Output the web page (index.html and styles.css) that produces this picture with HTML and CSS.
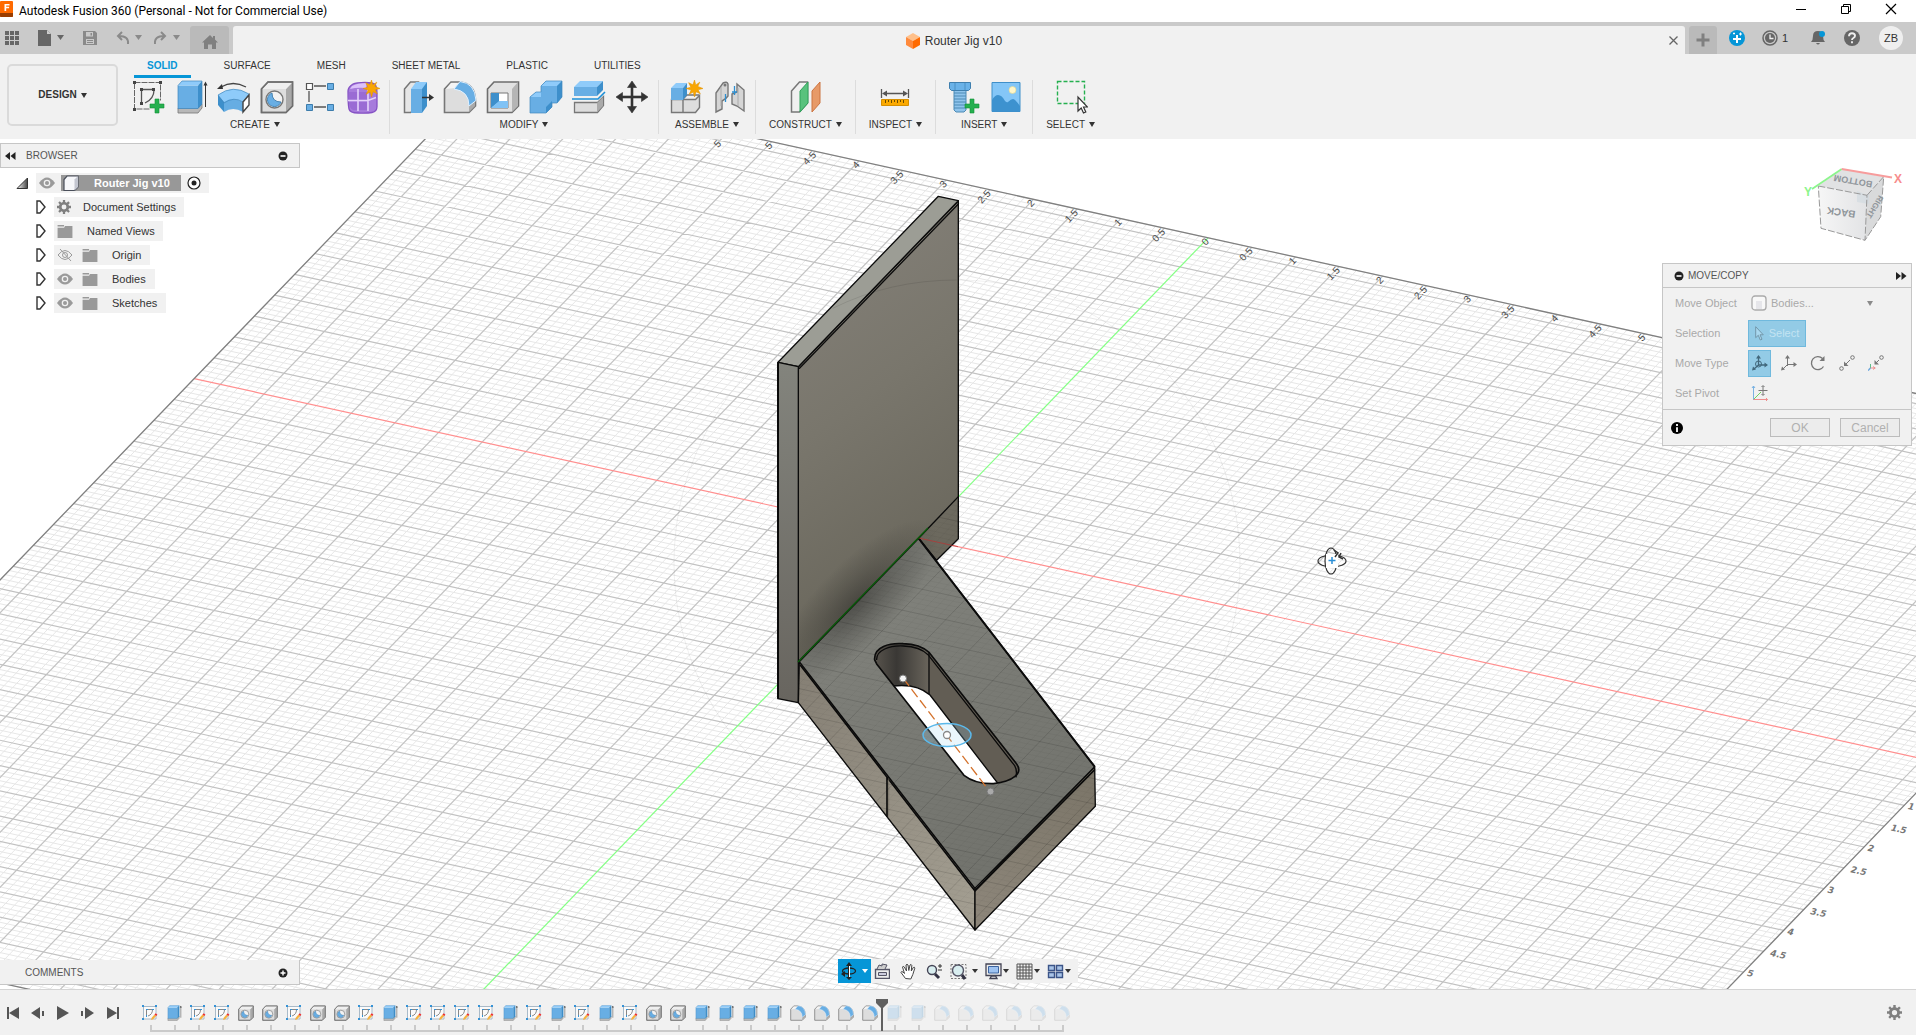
FILE: index.html
```html
<!DOCTYPE html>
<html lang="en">
<head>
<meta charset="utf-8">
<title>Autodesk Fusion 360 (Personal - Not for Commercial Use)</title>
<link rel="stylesheet" href="styles.css">
</head>
<body>
<svg class="sprite" aria-hidden="true">
  <defs>
    <linearGradient id="g-tri" x1="0" y1="0" x2="1" y2="0"><stop offset="0" stop-color="#fff"/><stop offset="1" stop-color="#444"/></linearGradient>
  </defs>
  <symbol id="star" viewBox="0 0 16 16"><path fill="#f9a602" stroke="#e39300" stroke-width=".5" d="M8 0l1.2 4.6L13 2l-1.900 4L16 8l-4.600 1.200L13.500 13l-4-1.900L8 16l-1.200-4.600L3 13.500l1.900-4L0 8l4.600-1.200L2.500 2.500l4 2z"/></symbol>
  <symbol id="i-sketch" viewBox="0 0 34 34">
    <path d="M3.500 3v26h16M3.500 2.500h26v18" fill="none" stroke="#666" stroke-dasharray="6 1"/>
    <path d="M10.500 23V9.500H22M23 10q0 9-9 13" fill="none" stroke="#555" stroke-width="1.300"/>
    <path d="M2 1h3v3H2zM28 1h3v3h-3zM2 28h3v3H2zM9 8h3v3H9zM21 8h3v3h-3zM9 22h3v3H9z" fill="#444"/>
    <path d="M24 19h4v5h5v4h-5v5h-4v-5h-5v-4h5z" fill="#25b04f" stroke="#129038" stroke-width=".6"/>
  </symbol>
  <symbol id="i-extrude" viewBox="0 0 34 34">
    <path d="M4 28h20l4-4v4l-4 5H4z" fill="#b8b8b8" stroke="#777" stroke-width=".8"/>
    <path d="M4 5.500h20v23H4z" fill="#68aee4"/><path d="M4 5.500L8 1h20l-4 4.500z" fill="#8fcbfa"/><path d="M24 5.500L28 1v23l-4 4.500z" fill="#3d8fcb"/>
    <path d="M4 28.500v-23L8 1h20v23l-4 4.500z" fill="none" stroke="#3f86bd" stroke-width=".7"/>
    <path d="M31.500 27V3" stroke="#333"/><path d="M31.500 1.500l2 4h-4z" fill="#333"/>
  </symbol>
  <symbol id="i-revolve" viewBox="0 0 34 34">
    <path d="M1 15q15-11 31-1l-6 8q-9-6-19 1z" fill="#8ecbfa"/>
    <path d="M1 15v10l6 7v-10z" fill="#3d8fcb"/><path d="M7 22q9-6 19 0v10q-10-6-19 0z" fill="#66ade3"/>
    <path d="M1 15q15-11 31-1l-6 8q-9-6-19 1z" fill="none" stroke="#3f86bd" stroke-width=".7"/>
    <path d="M26 22l6-7v10l-6 7z" fill="#fff" stroke="#444" stroke-width="1.400"/>
    <path d="M4 7q12-7 25 0" fill="none" stroke="#444" stroke-width="1.300"/><path d="M0 9l5-5 1 5z" fill="#333"/>
  </symbol>
  <symbol id="i-hole" viewBox="0 0 34 34">
    <path d="M1.500 9L8 2h24.500v24L26 32.500H1.500z" fill="#ddd" stroke="#777" stroke-width="1.600"/>
    <path d="M26 9l6-7v24l-6 6z" fill="#a9a9a9"/><path d="M2 9l6-6h24l-6 6z" fill="#efefef"/>
    <path d="M1.500 9L8 2h24.500v24L26 32.500H1.500z" fill="none" stroke="#6e6e6e" stroke-width="1.500"/>
    <circle cx="14.500" cy="19.500" r="8.500" fill="#f2f2f2" stroke="#777" stroke-width="1.400"/>
    <path d="M12 13a7 7 0 1 0 9 9q-9 0-9-9z" fill="#68aee4" stroke="#3d7cab" stroke-width=".9"/>
  </symbol>
  <symbol id="i-pattern" viewBox="0 0 34 34">
    <path d="M11 6h12M6 11v11M11 27h12" stroke="#555" stroke-width="1.300"/>
    <path d="M3.500 3.500h6v6h-6z" fill="#fff" stroke="#555" stroke-width="1.200"/>
    <path d="M24.500 3.500h6v6h-6zM3.500 24.500h6v6h-6zM24.500 24.500h6v6h-6z" fill="#68aee4" stroke="#3d7cab"/>
  </symbol>
  <symbol id="i-form" viewBox="0 0 34 34">
    <path d="M2 11q0-4 5-7 3-1.500 12-1.500 8 0 10 2 2 2 2 10v12q0 5-5 6t-14 .500q-8 0-9-4t-1-18z" fill="#a77bdc" stroke="#8552c4" stroke-width="1.300"/>
    <path d="M6 6q5-3 15-3l-1 5q-9-1-16 1z" fill="#dcc1fb"/><path d="M3 12h18v8H2.500zM3 22h18v8H7q-4-2-4-8z" fill="#9a6bd4"/>
    <path d="M12 9v22M2 20.500h20l8-3M22 9v22" fill="none" stroke="#e4d2fa" stroke-width="1.600"/>
    <use href="#star" x="17" y="0" width="17" height="17"/>
  </symbol>
  <symbol id="i-presspull" viewBox="0 0 34 34">
    <path d="M4.500 9l6-7h8v24l-8 6.500h-6z" fill="#e6e6e6" stroke="#777" stroke-width="1.500"/>
    <path d="M11 9l5-7h11l-4 7z" fill="#8ecbfa"/><path d="M11 9h11v24H11z" fill="#68aee4"/><path d="M22 9l5-7v24l-5 7z" fill="#3d8fcb"/>
    <path d="M22 17.500h9" stroke="#333" stroke-width="1.500"/><path d="M34 17.500l-5-3.500v7z" fill="#333"/>
  </symbol>
  <symbol id="i-fillet" viewBox="0 0 34 34">
    <path d="M1.500 9L8 2h8q16 1 16.500 18v6L26 32.500H1.500z" fill="#ddd" stroke="#777" stroke-width="1.600"/>
    <path d="M26 26l6-6v6l-6 6z" fill="#aaa"/><path d="M3 9l5-6h7l-3 5z" fill="#f4f4f4"/>
    <path d="M11 9l6-7.500q15 1.500 16 19l-7 5.500Q26 11 11 9z" fill="#68aee4" stroke="#dff0ff"/>
  </symbol>
  <symbol id="i-shell" viewBox="0 0 34 34">
    <path d="M1.500 9L8 2h24.500v24L26 32.500H1.500z" fill="#e2e2e2" stroke="#6e6e6e" stroke-width="1.600"/>
    <path d="M26 9l6-7v24l-6 6z" fill="#b5b5b5"/><path d="M5 13h17v15H5z" fill="#fff" stroke="#777"/>
    <path d="M5 13h8v9l-8 6z" fill="#3d8fcb"/><path d="M5 28l8-7h9v7z" fill="#7fc2f5"/>
  </symbol>
  <symbol id="i-combine" viewBox="0 0 34 34">
    <path d="M12 6l5-5h16v16l-5 6h-5v4l-6 6H1V17l6-5h5z" fill="#68aee4"/><path d="M12 6l5-5h16l-5 5z" fill="#8fcbfa"/><path d="M1 17l6-5h5v5z" fill="#8fcbfa"/>
    <path d="M28 6l5-5v16l-5 6zM17 27l6-6v6l-6 6z" fill="#3d8fcb"/>
    <path d="M12 6l5-5h16v16l-5 6h-5v4l-6 6H1V17l6-5h5z" fill="none" stroke="#3f86bd" stroke-width=".7"/>
  </symbol>
  <symbol id="i-split" viewBox="0 0 34 34">
    <path d="M2 7l6-6h23l-6 6z" fill="#8fcbfa"/><path d="M2 7h23v9H2z" fill="#68aee4"/><path d="M25 7l6-6v9l-6 6z" fill="#3d8fcb"/>
    <path d="M0 19h26l7-7" fill="none" stroke="#1d8fd6" stroke-width="1.600"/>
    <path d="M2.500 22.500h23l6-6v9l-6 7h-23z" fill="#ddd" stroke="#777" stroke-width="1.300"/><path d="M25 23l6-6v9l-6 6z" fill="#aaa"/>
  </symbol>
  <symbol id="i-move" viewBox="0 0 34 34"><path d="M17 1l4.500 6.500H18v8.500h8.500v-3.500L33 17l-6.500 4.500V18H18v8.500h3.500L17 33l-4.500-6.500H16V18H7.500v3.500L1 17l6.500-4.500V16H16V7.500h-3.500z" fill="#333" stroke="#333" stroke-width=".6"/></symbol>
  <symbol id="i-component" viewBox="0 0 34 34">
    <path d="M2.500 19.500h24l4-4v12l-4 5h-24z" fill="#ddd" stroke="#777" stroke-width="1.400"/><path d="M14 19.500v13M14 19l4-4h12" stroke="#777" fill="none" stroke-width="1.400"/>
    <path d="M2 8l5-5h11l-4 5z" fill="#8fcbfa"/><path d="M2 8h12v12H2z" fill="#68aee4"/><path d="M14 8l4-5v12l-4 5z" fill="#3d8fcb"/>
    <use href="#star" x="17" y="0" width="17" height="17"/>
  </symbol>
  <symbol id="i-joint" viewBox="0 0 34 34">
    <path d="M4 13l7-10q4-2 5 1v12q-2 3-6 5v8l-6 3z" fill="#d5d5d5" stroke="#777" stroke-width="1.400"/><path d="M9 7v19" stroke="#aaa"/><circle cx="13" cy="5" r="1.500" fill="#777"/>
    <path d="M25 4l7 6v21l-7-5-5-2V14l5-2z" fill="#d5d5d5" stroke="#777" stroke-width="1.400"/><path d="M26 8v18" stroke="#aaa"/>
    <path d="M13.500 14v8M22.500 6v9M20 12h5" stroke="#2e8fd0" stroke-width="1.300"/>
  </symbol>
  <symbol id="i-plane" viewBox="0 0 34 34">
    <path d="M3.500 11l8-9h8v21l-8 9h-8z" fill="#f0f0f0" stroke="#777" stroke-width="1.500"/>
    <path d="M12 11l8-9v21l-8 9z" fill="#58c27d" stroke="#2fa25a"/><path d="M24 11l8-9v21l-8 9z" fill="#e79a68" stroke="#cc7440"/>
  </symbol>
  <symbol id="i-measure" viewBox="0 0 34 34">
    <path d="M3.500 9v9M30.500 9v9M6 13.500h22" stroke="#555" stroke-width="1.300"/><path d="M4 13.500l5-3v6zM30 13.500l-5-3v6z" fill="#555"/>
    <path d="M3.500 19.500h27v6h-27z" fill="#fba900" stroke="#d68f00"/><path d="M7.500 20v3M10.500 20v2M13.500 20v3M16.500 20v2M19.500 20v3M22.500 20v2M25.500 20v3" stroke="#6a4a00"/>
  </symbol>
  <symbol id="i-bolt" viewBox="0 0 34 34">
    <path d="M8 10h12v20l-2 2h-8l-2-2z" fill="#8fc4ec" stroke="#4c8ab5"/><path d="M8 13h12M8 16h12M8 19h12M8 22h12M8 25h12M8 28h12" stroke="#4c8ab5"/>
    <path d="M3.500 2.500h21v6l-2 2h-17l-2-2z" fill="#6ab2e8" stroke="#3f7fae"/><path d="M9 3v7M19 3v7" stroke="#4a90c4"/>
    <path d="M24 19h4v5h5v4h-5v5h-4v-5h-5v-4h5z" fill="#25b04f" stroke="#129038" stroke-width=".6"/>
  </symbol>
  <symbol id="i-image" viewBox="0 0 34 34">
    <path d="M3 2.500h28v29H3z" fill="#84c6f7" stroke="#3f8fc9"/><circle cx="23.500" cy="10" r="3.500" fill="#fff6c9" stroke="#e2d58a" stroke-width=".6"/>
    <path d="M3 20q3-5 6-5 4 0 7 6 2 2 3 1 3-3 5-3t7 7v5.500H3z" fill="#3d92cf"/>
  </symbol>
  <symbol id="i-select" viewBox="0 0 34 34">
    <path d="M3.500 1.500h27v22h-27z" fill="none" stroke="#25b04f" stroke-width="1.400" stroke-dasharray="4 2"/>
    <path d="M24 17v14l3.200-3 2.300 5 2.300-1-2.300-5h4z" fill="#fff" stroke="#333" stroke-width="1.200"/>
  </symbol>
  <symbol id="t-sketch" viewBox="0 0 16 16">
    <path d="M1.500 1.500h12.500v12.500H1.500z" fill="#fafafa" stroke="#a9bac8"/><path d="M4.500 11V4.500h6q0 5-4.500 6.500" fill="none" stroke="#888"/>
    <path d="M0 0h2v2H0zM13 0h2v2h-2zM0 13h2v2H0zM4 4h2v1H4zM10 4h2v1h-2zM4 10h1v2H4z" fill="#3492d6"/>
    <path d="M9 15l.700-2.200 2.800-3.200 1.600 1.500-2.900 3.200z" fill="#f7b13c"/><path d="M12.500 9.500l1.300-1.300 1.600 1.500-1.200 1.400z" fill="#f12c2c"/>
  </symbol>
  <symbol id="eye" viewBox="0 0 16 12"><path d="M0 6q8-11 16 0-8 11-16 0z" fill="#9a9a9a"/><circle cx="8" cy="6" r="3.300" fill="#f1f1f1"/><circle cx="8" cy="6" r="2" fill="#9a9a9a"/></symbol>
  <symbol id="eye-off" viewBox="0 0 16 12"><path d="M1 6q7-9 14 0-7 9-14 0zM3 0l11 12" fill="none" stroke="#9a9a9a"/><circle cx="8" cy="6" r="2.500" fill="none" stroke="#9a9a9a"/></symbol>
  <symbol id="folder" viewBox="0 0 16 14"><path d="M0 0h7v1.500H0zM0 3h7l1-2h8v13H0z" fill="#999"/></symbol>
  <symbol id="gear" viewBox="0 0 16 16"><path fill="#808080" fill-rule="evenodd" d="M6.700 0h2.600v2.300l1.800.8L12.900 1.500l1.800 1.800-1.700 1.700.8 1.700H16v2.600h-2.200l-.8 1.800 1.700 1.700-1.800 1.800-1.700-1.700-1.900.8V16H6.700v-2.300l-1.800-.8-1.700 1.700-1.800-1.800L3 11.100l-.8-1.800H0V6.700h2.200L3 4.900 1.400 3.200l1.800-1.800L4.900 3.100l1.800-.8zM8 5.200a2.800 2.800 0 1 0 0 5.600 2.800 2.800 0 0 0 0-5.600z"/></symbol>
  <symbol id="expander" viewBox="0 0 10 14"><path d="M1 1l3 0 5 6-5 6H1z" fill="#fff" stroke="#333" stroke-width="1.400"/></symbol>
  <symbol id="cube" viewBox="0 0 16 16"><path d="M1 4.500L4 1h11v11l-3.500 3.500H1z" fill="#f6f7fa" stroke="#4a4f5a" stroke-width="1.200"/><path d="M11.500 4.500L15 1v11l-3.500 3.500z" fill="#c3c6d0"/></symbol>
  <symbol id="minus" viewBox="0 0 10 10"><circle cx="5" cy="5" r="4.500" fill="#222"/><path d="M2.500 5h5" stroke="#fff" stroke-width="1.600"/></symbol>
  <symbol id="plus" viewBox="0 0 10 10"><circle cx="5" cy="5" r="4.500" fill="#222"/><path d="M2.500 5h5M5 2.500v5" stroke="#fff" stroke-width="1.400"/></symbol>
</svg>

<header>
  <div class="titlebar">
    <svg class="app-logo" width="13" height="16" viewBox="0 0 13 16" aria-hidden="true"><rect width="13" height="16" rx="1" fill="#ff6a00"/><path d="M0 12h13v3q0 1-1 1H1q-1 0-1-1z" fill="#9a3d00"/><path d="M4.500 10V3h5v1.500H6.200v1.300h2.900v1.500H6.200V10z" fill="#fff"/></svg>
    <h1>Autodesk Fusion 360 (Personal - Not for Commercial Use)</h1>
    <div class="window-controls">
      <button aria-label="Minimize"><svg width="12" height="12"><path d="M1 6.500h10" stroke="#000"/></svg></button>
      <button aria-label="Restore"><svg width="12" height="12"><path d="M1.500 3.500h7v7h-7zM3.500 3V1.500h7v7H9" fill="none" stroke="#000"/></svg></button>
      <button aria-label="Close"><svg width="12" height="12"><path d="M1 1l10 10M11 1L1 11" stroke="#000" stroke-width="1.200"/></svg></button>
    </div>
  </div>

  <div class="appbar">
    <div class="quick">
      <button class="q-grid" aria-label="Data panel"><svg width="14" height="14"><path d="M0 0h4v4H0zM5 0h4v4H5zM10 0h4v4h-4zM0 5h4v4H0zM5 5h4v4H5zM10 5h4v4h-4zM0 10h4v4H0zM5 10h4v4H5zM10 10h4v4h-4z" fill="#666"/></svg></button>
      <button class="q-file" aria-label="File"><svg width="26" height="16"><path d="M0 0h9l4 4v12H0z" fill="#666"/><path d="M9 0v4h4" fill="#ccc"/><path d="M19 5h7l-3.500 5z" fill="#666"/></svg></button>
      <button class="q-save" aria-label="Save"><svg width="14" height="14"><path fill-rule="evenodd" d="M0 0h12l2 2v12H0zM3 1v4.500h7V1zM3 8v5h8V8zM7.500 2h1.500v2.500H7.500z" fill="#8a8a8a"/><path d="M4 9.500h6M4 11.500h6" stroke="#8a8a8a"/></svg></button>
      <button class="q-undo" aria-label="Undo"><svg width="26" height="14"><path d="M12 13Q13 5 3 5M6 1L2 5l4 4" fill="none" stroke="#8a8a8a" stroke-width="2"/><path d="M19 4h7l-3.500 5z" fill="#8a8a8a"/></svg></button>
      <button class="q-redo" aria-label="Redo"><svg width="26" height="14"><path d="M1 13Q0 5 10 5M7 1l4 4-4 4" fill="none" stroke="#8a8a8a" stroke-width="2"/><path d="M19 4h7l-3.500 5z" fill="#8a8a8a"/></svg></button>
    </div>
    <button class="tab-home" aria-label="Home"><svg width="16" height="16"><path d="M8 1L0 8.500h2V15h4v-4.500h4V15h4V8.500h2L13 5.500V2h-2v2z" fill="#808080"/></svg></button>
    <div class="tab-doc">
      <svg width="14" height="16" viewBox="0 0 14 16" aria-hidden="true"><path d="M7 0l7 4-7 4-7-4z" fill="#ffc08a"/><path d="M0 4l7 4v8l-7-4z" fill="#ff8a3c"/><path d="M14 4L7 8v8l7-4z" fill="#ff6a00"/></svg>
      <span>Router Jig v10</span>
      <button class="tab-close" aria-label="Close tab"><svg width="9" height="9"><path d="M.5.5l8 8M8.500.5l-8 8" stroke="#666" stroke-width="1.300"/></svg></button>
    </div>
    <button class="tab-new" aria-label="New tab"><svg width="14" height="14"><path d="M7 0.500v13M.5 7h13" stroke="#808080" stroke-width="3"/></svg></button>
    <div class="account">
      <button aria-label="Extensions"><svg width="16" height="16"><circle cx="8" cy="8" r="8" fill="#0696d7"/><path d="M8 5v8M4 9h8" stroke="#fff" stroke-width="2"/><path d="M4 3.500h2M5 2.500v2M10 4h3M11.500 2.500v3" stroke="#fff"/></svg></button>
      <button class="jobs"><svg width="16" height="16"><circle cx="8" cy="8" r="7" fill="none" stroke="#666" stroke-width="1.500"/><circle cx="8" cy="8" r="5" fill="#666"/><path d="M8 4.500V8.500h3.500" fill="none" stroke="#eee" stroke-width="1.300"/></svg>1</button>
      <button class="bell" aria-label="Notifications"><svg width="16" height="16"><path d="M7 1q5 0 5 5 0 4 2 6H0q2-2 2-6 0-5 5-5zM5 13h4q-2 3-4 0z" fill="#666"/><circle cx="11" cy="4" r="3" fill="#0696d7"/></svg></button>
      <button class="help" aria-label="Help"><svg width="16" height="16"><circle cx="8" cy="8" r="8" fill="#666"/><path d="M5 6.200q0-3 3-3t3 2.600q0 1.400-1.600 2.200-1.400.7-1.400 1.900M8 11.300v2" fill="none" stroke="#eee" stroke-width="1.900"/></svg></button>
      <button class="avatar">ZB</button>
    </div>
  </div>

  <div class="ribbon">
    <button class="workspace">DESIGN<i class="caret"></i></button>
    <div class="toolbox">
      <nav class="tabs">
        <button class="active">SOLID</button><button>SURFACE</button><button>MESH</button><button>SHEET METAL</button><button>PLASTIC</button><button>UTILITIES</button>
      </nav>
      <div class="groups">
        <section class="first">
          <div class="tools"><button aria-label="Create Sketch"><svg><use href="#i-sketch"/></svg></button><button aria-label="Extrude"><svg><use href="#i-extrude"/></svg></button><button aria-label="Revolve"><svg><use href="#i-revolve"/></svg></button><button aria-label="Hole"><svg><use href="#i-hole"/></svg></button><button aria-label="Pattern"><svg><use href="#i-pattern"/></svg></button><button aria-label="Create Form"><svg><use href="#i-form"/></svg></button></div>
          <button class="menu">CREATE<i class="caret"></i></button>
        </section>
        <section>
          <div class="tools"><button aria-label="Press Pull"><svg><use href="#i-presspull"/></svg></button><button aria-label="Fillet"><svg><use href="#i-fillet"/></svg></button><button aria-label="Shell"><svg><use href="#i-shell"/></svg></button><button aria-label="Combine"><svg><use href="#i-combine"/></svg></button><button aria-label="Split Body"><svg><use href="#i-split"/></svg></button><button aria-label="Move"><svg><use href="#i-move"/></svg></button></div>
          <button class="menu">MODIFY<i class="caret"></i></button>
        </section>
        <section>
          <div class="tools"><button aria-label="New Component"><svg><use href="#i-component"/></svg></button><button aria-label="Joint"><svg><use href="#i-joint"/></svg></button></div>
          <button class="menu">ASSEMBLE<i class="caret"></i></button>
        </section>
        <section>
          <div class="tools"><button aria-label="Offset Plane"><svg><use href="#i-plane"/></svg></button></div>
          <button class="menu">CONSTRUCT<i class="caret"></i></button>
        </section>
        <section>
          <div class="tools"><button aria-label="Measure"><svg><use href="#i-measure"/></svg></button></div>
          <button class="menu">INSPECT<i class="caret"></i></button>
        </section>
        <section>
          <div class="tools"><button aria-label="Insert Part"><svg><use href="#i-bolt"/></svg></button><button aria-label="Canvas"><svg><use href="#i-image"/></svg></button></div>
          <button class="menu">INSERT<i class="caret"></i></button>
        </section>
        <section>
          <div class="tools"><button aria-label="Select"><svg><use href="#i-select"/></svg></button></div>
          <button class="menu">SELECT<i class="caret"></i></button>
        </section>
      </div>
    </div>
  </div>
</header>

<main>
  <svg class="scene" viewBox="0 139 1916 850" preserveAspectRatio="xMidYMid slice" aria-label="Model view">
    <defs>
      <linearGradient id="m-front" x1="0" y1="0" x2=".25" y2="1"><stop offset="0" stop-color="#86827b"/><stop offset=".5" stop-color="#79766c"/><stop offset="1" stop-color="#68655a"/></linearGradient>
      <linearGradient id="m-side" x1="0" y1="0" x2="0" y2="1"><stop offset="0" stop-color="#83847d"/><stop offset="1" stop-color="#68655f"/></linearGradient>
      <linearGradient id="m-top" x1="0" y1="0" x2=".5" y2="1"><stop offset="0" stop-color="#757670"/><stop offset=".3" stop-color="#7f807a"/><stop offset="1" stop-color="#72736d"/></linearGradient>
      <linearGradient id="m-left" x1="0" y1="0" x2="1" y2="1"><stop offset="0" stop-color="#857f74"/><stop offset="1" stop-color="#a49f92"/></linearGradient>
      <linearGradient id="m-right" x1="0" y1="1" x2="1" y2="0"><stop offset="0" stop-color="#8d867a"/><stop offset="1" stop-color="#7b7568"/></linearGradient>
      <radialGradient id="m-shade" gradientUnits="userSpaceOnUse" cx="0" cy="0" r="1" gradientTransform="translate(290 1270) rotate(-46) scale(330 120)"><stop offset="0" stop-color="#2c2b28" stop-opacity=".55"/><stop offset=".5" stop-color="#2c2b28" stop-opacity=".25"/><stop offset="1" stop-color="#2c2b28" stop-opacity="0"/></radialGradient>
      <linearGradient id="m-slot"><stop offset="0" stop-color="#5f5a52"/><stop offset=".45" stop-color="#3a3835"/><stop offset="1" stop-color="#6a655c"/></linearGradient>
      <clipPath id="plate"><path d="M476 1075l525 687 5 117-361 371-530-682v-123zM595 950v126l-65 65-54-66z"/></clipPath>
      <clipPath id="slot"><path d="M344 1440C340 1400 390 1388 430 1391Q480 1392 508 1418L770 1752C790 1780 760 1804 700 1811Q645 1812 612 1786L350 1452z"/></clipPath>
      <linearGradient id="vc"><stop offset="0" stop-color="#f6f6f6"/><stop offset="1" stop-color="#e2e3e5"/></linearGradient>
    </defs>
    <g id="grid" fill="none"></g>
    <circle cx="957" cy="563" r="283" fill="none" stroke="#000" stroke-opacity=".06"/>
    <g id="rulers"></g>
    <g transform="translate(760 180) scale(.33333)" stroke="#0b0b0b" stroke-width="4" stroke-linejoin="round">
      <path d="M115 560L595 62V1076L530 1141 476 1075 115 1445z" fill="url(#m-front)"/>
      <path d="M115 560L595 62V1076L530 1141 476 1075 115 1445z" fill="url(#m-shade)" stroke="none"/>
      <path d="M54 547L535 49 595 62 115 560z" fill="#9c9d95"/>
      <path d="M54 547L115 560V1568L54 1556z" fill="url(#m-side)"/>
      <path d="M54 547V1556" stroke-width="6"/>
      <path d="M117 566L595 72" fill="none"/>
      <path d="M218 385Q390 300 590 300" fill="none" stroke-opacity=".1" stroke-width="3"/>
      <path d="M595 950L476 1075" fill="none"/>
      <path d="M118 1445L645 2125V2250L115 1568z" fill="url(#m-left)"/>
      <path d="M1004 1760L1006 1879 645 2250V2130z" fill="url(#m-right)"/>
      <path d="M476 1075L1004 1760 645 2125 118 1445z" fill="url(#m-top)"/>
      <path d="M476 1075L1004 1760 645 2125 118 1445z" fill="url(#m-shade)" stroke="none"/>
      <path d="M120 1454L645 2133 1005 1768M381 1790V1910" fill="none" stroke-width="5"/>
      <path d="M386 1795V1912" fill="none" stroke="#746e62" stroke-width="2"/>
      <path d="M476 1075L1004 1760" stroke-width="6"/>
    </g>
    <g id="overlay"></g>
    <g transform="translate(760 180) scale(.33333)" stroke="#0b0b0b" stroke-width="4" stroke-linejoin="round">
      <g clip-path="url(#slot)">
        <rect x="330" y="1380" width="460" height="440" fill="#625d54" stroke="none"/>
        <rect x="330" y="1380" width="178" height="180" fill="url(#m-slot)" stroke="none"/>
        <path d="M400 1518Q470 1510 510 1545L715 1812H560z" fill="#fff"/>
        <path d="M507 1415V1542" fill="none"/>
      </g>
      <path d="M344 1440C340 1400 390 1388 430 1391Q480 1392 508 1418L770 1752C790 1780 760 1804 700 1811Q645 1812 612 1786L350 1452z" fill="none" stroke-width="5"/>
      <path d="M350 1440C348 1410 390 1396 430 1398Q480 1400 504 1424L764 1757Q772 1770 768 1792" fill="none"/>
    </g>
    <path d="M918.700 538L958 546.700" stroke="#b33" stroke-width="1" opacity=".7"/>
    <path d="M928 528L798 662" stroke="#0b5a0b" stroke-width="1.500"/>
    <path d="M903 678l87 114" stroke="#d4722c" stroke-width="1.300" stroke-dasharray="10 4" fill="none"/>
    <g stroke="#777" fill="#f4f4f4"><circle cx="903" cy="678.500" r="3.500"/><circle cx="990.500" cy="791.500" r="3.500" fill="#aaa"/></g>
    <ellipse cx="947" cy="735" rx="24" ry="11.500" fill="#9fd4f2" fill-opacity=".22" stroke="#5bb8ea" stroke-width="1.500"/>
    <circle cx="947" cy="735" r="3.500" fill="#fff" stroke="#888" stroke-width="1.300"/>
    <g class="viewcube">
      <path d="M1818.300 186l48.700 9.300-2 45-44-12z" fill="url(#vc)"/>
      <path d="M1841.700 169l42 7.700-16.700 18.600-48.700-9.300z" fill="#e1e2e3"/>
      <path d="M1883.700 176.700l-3 40-15.700 23.600 2-45z" fill="#d9dadb"/>
      <path d="M1857 191l10 4 2-3 0 12-12-2z" fill="#cfd8df" opacity=".6"/>
      <path d="M1818.300 186l48.700 9.300-2 45-44-12zM1867 195.300l16.700-18.600-3 40-15.700 23.600" fill="none" stroke="#999" stroke-dasharray="7 2"/>
      <path d="M1841.700 169L1812 189" stroke="#8cf58c" stroke-width="1.800"/><path d="M1841.700 169L1892 177.500" stroke="#f79c9c" stroke-width="1.800"/>
      <text x="1841" y="213" class="vc-text" transform="rotate(188 1841 213)" dy="4">BACK</text>
      <text x="1853" y="181" class="vc-text mid" transform="rotate(190 1853 181)" dy="3">BOTTOM</text>
      <text x="1875" y="207" class="vc-text small" transform="rotate(122 1875 207)" dy="3">RIGHT</text>
      <text x="1808" y="196" class="vc-axis" fill="#8cf58c">Y</text><text x="1898" y="183" class="vc-axis" fill="#f78c8c">X</text>
    </g>
    <g fill="none" stroke="#333" stroke-width="1.200"><ellipse cx="1332" cy="561" rx="14" ry="6"/><ellipse cx="1331" cy="561" rx="6" ry="13"/><path d="M1326 554h12v14h-12z" fill="#fff" stroke="none"/><path d="M1328.500 560.500h7M1332 557v7" stroke="#2b8fd6" stroke-width="1.500"/><path d="M1334 550l4 3-3 4M1341 553l-2 4 4 2" stroke-width="1.500"/></g>
  </svg>

  <aside class="browser">
    <div class="panel-head"><svg width="11" height="8"><path d="M5 0v8L0 4zM10.500 0v8l-5-4z" fill="#222"/></svg><h2>BROWSER</h2><svg width="10" height="10"><use href="#minus"/></svg></div>
    <ul class="tree">
      <li class="root"><svg width="12" height="12"><path d="M1 11.500h10.500V1z" fill="url(#g-tri)" stroke="#333"/></svg>
        <div class="node"><svg width="16" height="12"><use href="#eye"/></svg><b><svg width="16" height="16"><use href="#cube"/></svg>Router Jig v10</b><svg width="14" height="14"><circle cx="7" cy="7" r="6" fill="#fff" stroke="#222" stroke-width="1.200"/><circle cx="7" cy="7" r="2.500" fill="#222"/></svg></div></li>
      <li><svg width="10" height="14"><use href="#expander"/></svg><div class="node settings"><svg width="14" height="14"><use href="#gear"/></svg>Document Settings</div></li>
      <li><svg width="10" height="14"><use href="#expander"/></svg><div class="node views"><svg width="16" height="13"><use href="#folder"/></svg>Named Views</div></li>
      <li><svg width="10" height="14"><use href="#expander"/></svg><div class="node"><svg width="16" height="12"><use href="#eye-off"/></svg><svg width="16" height="13"><use href="#folder"/></svg><span>Origin</span></div></li>
      <li><svg width="10" height="14"><use href="#expander"/></svg><div class="node"><svg width="16" height="12"><use href="#eye"/></svg><svg width="16" height="13"><use href="#folder"/></svg><span>Bodies</span></div></li>
      <li><svg width="10" height="14"><use href="#expander"/></svg><div class="node"><svg width="16" height="12"><use href="#eye"/></svg><svg width="16" height="13"><use href="#folder"/></svg><span>Sketches</span></div></li>
    </ul>
  </aside>

  <form class="dialog">
    <div class="dialog-head"><svg width="10" height="10"><use href="#minus"/></svg><h2>MOVE/COPY</h2><svg width="11" height="8"><path d="M0 0v8l5-4zM5.500 0v8l5-4z" fill="#222"/></svg></div>
    <div class="fields">
      <label for="obj">Move Object</label>
      <div class="combo"><svg width="16" height="16"><rect x="1" y="1" width="14" height="14" rx="3" fill="#f8f8f8" stroke="#aaa" stroke-width="1.300"/><path d="M5 6h6v8H5z" fill="#e6e6ea"/></svg><select id="obj" disabled><option>Bodies...</option></select><i class="caret"></i></div>
      <span>Selection</span>
      <div><button type="button" class="pick" disabled><svg width="9" height="15"><path d="M.7.7v11l2.600-2.400 2 4.700 1.700-.8-2-4.400h3.300z" fill="#a9d8ef" stroke="#7297aa"/></svg>Select</button></div>
      <span>Move Type</span>
      <div class="types">
        <button type="button" class="on" aria-label="Free Move"><svg width="16" height="16"><path d="M6.500 11V1M6.500 10h8M6.500 10L2 14" stroke="#42687c" stroke-width="1.300"/><path d="M6.500 0l2.500 3.500H4zM16 10l-3.500 2.500v-5zM0 15.500l1-4 3 3z" fill="#42687c"/><circle cx="6.500" cy="9" r="3" fill="none" stroke="#42687c"/></svg></button>
        <button type="button" aria-label="Translate"><svg width="16" height="16"><path d="M6.500 11V1M6.500 9.500h8M6.500 9.500L2 14" stroke="#777"/><path d="M6.500 0l2.500 3.500H4zM16 9.500l-3.500 2.500v-5zM0 15.500l1-4 3 3z" fill="#777"/></svg></button>
        <button type="button" aria-label="Rotate"><svg width="16" height="16"><path d="M12.500 3.500a6.500 6.500 0 1 0 1 8" fill="none" stroke="#777" stroke-width="1.300"/><path d="M14.500 1v5h-5z" fill="#777"/></svg></button>
        <button type="button" aria-label="Point to Point"><svg width="16" height="16"><circle cx="13.500" cy="2.500" r="1.800" fill="none" stroke="#777"/><circle cx="2.500" cy="13.500" r="1.800" fill="none" stroke="#777"/><path d="M11 5L7 9" stroke="#777"/><path d="M5 11V6.500L9.500 11z" fill="#777"/></svg></button>
        <button type="button" aria-label="Point to Position"><svg width="16" height="16"><circle cx="13.500" cy="2.500" r="1.800" fill="none" stroke="#777"/><path d="M11 5L8 8" stroke="#777"/><path d="M6.500 9.500V5L11 9.500z" fill="#777"/><path d="M2.500 13V9" stroke="#5fc088"/><path d="M2.500 13h5M5 11.500L7 13l-2 1.500" stroke="#ee8d8d" fill="none"/><path d="M2.500 13L0 15.500" stroke="#69a5dd" stroke-width="1.500"/></svg></button>
      </div>
      <span>Set Pivot</span>
      <div class="pivot"><button type="button" aria-label="Set Pivot"><svg width="18" height="16"><path d="M2.500 15V1M1 3l1.500-2L4 3" stroke="#7ab2e2" fill="none"/><path d="M2.500 14.500h14M15 13l1.500 1.500L15 16" stroke="#ee8d8d" fill="none"/><path d="M3 14l7-7" stroke="#6fd45f"/><path d="M12 1v9M7.500 5.500h9" stroke="#777"/><path d="M10.500 2L12 .5 13.500 2M10.500 9l1.500 1.500L13.500 9" fill="none" stroke="#777"/></svg></button></div>
    </div>
    <div class="actions"><svg width="12" height="12"><circle cx="6" cy="6" r="6"/><path d="M6 2v2M6 5.200V10" stroke="#fff" stroke-width="1.800"/></svg><button type="button" disabled>OK</button><button type="button" disabled>Cancel</button></div>
  </form>

  <aside class="comments"><h2>COMMENTS</h2><svg width="10" height="10"><use href="#plus"/></svg></aside>

  <nav class="navbar">
    <button class="orbit" aria-label="Orbit"><svg width="16" height="18"><ellipse cx="8" cy="9" rx="6.500" ry="3" fill="none" stroke="#222" stroke-width="1.300"/><path d="M8 2v14" stroke="#fff" stroke-width="2"/><path d="M8 0l3 4H5zM8 18l3-3H5zM0 12l4-3v6z" fill="#222"/><path d="M7.500 4v11" stroke="#222"/></svg><i class="caret light"></i></button>
    <button aria-label="Look At"><svg width="16" height="16"><path d="M1.500 6.500h14v9h-14z" fill="#eee" stroke="#556" stroke-width="1.400"/><path d="M4.500 9.500h8v3h-8z" fill="#ccd" stroke="#556"/><path d="M3 6l2-4 3 1v-2l5 1-2 4" fill="#ccc" stroke="#556"/></svg></button>
    <button aria-label="Pan"><svg width="17" height="17"><path d="M5.500 15.500L1 9.500q0-1.500 2-.5l1.500 1.500L2.500 4q.5-1.500 1.800 0L6.500 8 6 2q1-1.500 2 0l.8 5.500L10 2q1.200-1.200 1.800.2L11.300 8l2-3.500q1.500-.8 1.500.7l-2 6.300-2 4.500z" fill="#fff" stroke="#444"/></svg></button>
    <button aria-label="Zoom"><svg width="17" height="17"><circle cx="6" cy="7" r="4.500" fill="#d9eef0" stroke="#445" stroke-width="1.400"/><path d="M9 11l4 4" stroke="#334" stroke-width="3"/><path d="M14 1v4M12 3h4M12 7h4" stroke="#333"/></svg></button>
    <button class="wide" aria-label="Fit"><svg width="17" height="17"><path d="M1 1.500h15v14H1z" fill="none" stroke="#777" stroke-dasharray="2 1.500"/><circle cx="8" cy="7.500" r="5.500" fill="#d9eef0" stroke="#556" stroke-width="1.400"/><path d="M12 12l3 4" stroke="#334" stroke-width="3"/></svg><i class="caret"></i></button>
    <button class="wide tight" aria-label="Display Settings"><svg width="17" height="17"><path d="M1 1h15v11.500H1zM5 15.500h7L10.500 13h-4z" fill="#eee" stroke="#445" stroke-width="1.300"/><path d="M3.500 3.500h10v6.500h-10z" fill="#9ec3f2" stroke="#3d64a0"/></svg><i class="caret"></i></button>
    <button class="wide tight" aria-label="Grid and Snaps"><svg width="17" height="17"><path d="M1 1h15v15H1zM4 1v15M7 1v15M10 1v15M13 1v15M1 4h15M1 7h15M1 10h15M1 13h15" fill="none" stroke="#555"/></svg><i class="caret"></i></button>
    <button class="wide tight" aria-label="Viewports"><svg width="17" height="15"><path d="M1.500 1.500h6v5h-6zM9.500 1.500h6v5h-6zM1.500 8.500h6v5h-6zM9.500 8.500h6v5h-6z" fill="#a9c4e8" stroke="#3b5488" stroke-width="1.400"/></svg><i class="caret"></i></button>
  </nav>
</main>

<footer>
  <div class="playback">
    <button aria-label="To start"><svg width="12" height="12"><path d="M0 0h2v12H0zM12 0v12L2 6z" fill="#555"/></svg></button>
    <button aria-label="Step back"><svg width="13" height="12"><path d="M9 0v12L0 6zM11 4h2v5h-2z" fill="#555"/></svg></button>
    <button aria-label="Play"><svg width="12" height="14"><path d="M0 0l12 7-12 7z" fill="#555"/></svg></button>
    <button aria-label="Step forward"><svg width="13" height="12"><path d="M4 0v12l9-6zM0 4h2v5H0z" fill="#555"/></svg></button>
    <button aria-label="To end"><svg width="12" height="12"><path d="M10 0h2v12h-2zM0 0v12l10-6z" fill="#555"/></svg></button>
  </div>
  <ol class="timeline" id="timeline"></ol>
  <button class="prefs" aria-label="Preferences"><svg width="15" height="15"><use href="#gear"/></svg></button>
</footer>
<script src="script.js"></script>
</body>
</html>
```
FILE: styles.css
```css
* { box-sizing: border-box; }
body { margin: 0; height: 100vh; display: flex; flex-direction: column; overflow: hidden; background: #fff; color: #333; font: 11px/16px "Liberation Sans", Arial, sans-serif; }
button { font: inherit; color: inherit; background: none; border: 0; padding: 0; display: flex; align-items: center; justify-content: center; }
h1, h2 { margin: 0; font-weight: normal; }
ul, ol { margin: 0; padding: 0; list-style: none; }
svg { flex: none; display: block; }
.sprite { position: absolute; width: 0; height: 0; }
.caret { display: block; margin-left: 4px; border: 3px solid transparent; border-top: 5px solid #333; border-bottom: 0; }

.titlebar { height: 22px; display: flex; align-items: center; }
.app-logo { margin-top: -4px; }
.titlebar h1 { margin: 0 0 0 6px; flex: 1; color: #000; font: 12px/16px Roboto, sans-serif; }
.window-controls { display: flex; margin-top: -4px; padding-right: 3px; }
.window-controls button { width: 45px; }

.appbar { height: 32px; padding: 4px 2px 0 0; background: #cacaca; display: flex; }
.quick { display: flex; align-items: center; width: 190px; padding: 0 0 4px 5px; }
.q-file, .q-save, .q-undo { margin-left: 19px; }
.q-redo { margin-left: 12px; }
.tab-home { width: 39px; background: #bababa; border-radius: 3px 3px 0 0; padding-top: 3px; }
.tab-doc { flex: 1; margin-left: 4px; display: flex; align-items: center; justify-content: center; gap: 5px; background: #f1f1f1; border-radius: 3px 3px 0 0; position: relative; font-size: 12px; padding: 2px 10px 0 0; }
.tab-close { position: absolute; right: 7px; top: 10px; }
.tab-new { width: 28px; margin: 0 12px 0 4px; background: #bababa; border-radius: 3px 3px 0 0; }
.account { display: flex; align-items: center; padding: 0 11px 4px 0; }
.jobs { gap: 4px; margin-left: 17px; }
.bell { margin-left: 23px; }
.help { margin-left: 17px; }
.avatar { margin-left: 19px; width: 24px; height: 24px; border-radius: 12px; background: #efefef; }

.ribbon { height: 85px; background: #f1f1f1; display: flex; padding-left: 7px; }
.workspace { width: 111px; height: 62px; margin-top: 10px; border: 2px solid #dadada; border-radius: 5px; font-size: 10px; font-weight: bold; }
.tabs { display: flex; gap: 20px; padding-left: 16px; }
.tabs button { height: 24px; padding: 2px 13px 0; font-size: 10px; border-bottom: 3px solid transparent; }
.tabs .active { color: #0696d7; border-color: #0696d7; font-weight: bold; }
.groups { display: flex; padding-top: 2px; }
.groups section { display: flex; flex-direction: column; align-items: center; border-left: 1px solid #dcdcdc; padding: 0 5px; height: 54px; }
.groups .first { border: 0; padding-left: 8px; }
.tools { display: flex; height: 34px; }
.tools button { width: 43px; }
.tools svg { width: 34px; height: 34px; }
.menu { height: 24px; font-size: 10px; padding: 1px 8px 0; }

main { flex: 1; position: relative; overflow: hidden; min-height: 0; }
.scene { position: absolute; inset: 0; width: 100%; height: 100%; }
.ruler-top { font-size: 10px; fill: #4a4a4a; text-anchor: end; }
.ruler-right { font: italic bold 9px "DejaVu Sans", sans-serif; fill: #777; }
.vc-text { font-weight: bold; font-size: 10px; fill: #8f959a; text-anchor: middle; }
.vc-text.mid { font-size: 9px; }
.vc-text.small { font-size: 8px; }
.vc-axis { font-weight: bold; font-size: 12px; text-anchor: middle; }

h2 { font-size: 10px; color: #555; flex: 1; }
.browser { position: absolute; left: 0; top: 4px; width: 300px; }
.panel-head { height: 25px; display: flex; align-items: center; gap: 10px; padding: 0 11px 0 4px; background: #f1f1f1; border: 1px solid #c6c6c6; }
.tree { padding-top: 3px; }
.tree li { display: flex; align-items: center; height: 24px; gap: 8px; padding-left: 36px; }
.tree .root { padding-left: 16px; }
.node { height: 20px; display: flex; align-items: center; background: #f1f1f1; padding: 0 8px 0 3px; gap: 9px; }
.node span { padding: 0 1px 0 5px; }
.node.settings { gap: 12px; }
.node.views { gap: 14px; }
.root .node { gap: 6px; }
.node b { display: flex; align-items: center; gap: 15px; background: #989898; color: #fff; height: 16px; padding: 0 11px 0 2px; }

.dialog { position: absolute; right: 4px; top: 124px; width: 250px; background: #f1f1f1; border: 1px solid #c6c6c6; color: #a9a9a9; }
.dialog-head { height: 24px; display: flex; align-items: center; gap: 4px; padding: 0 4px 0 11px; border-bottom: 1px solid #c6c6c6; }
.fields { display: grid; grid-template-columns: 73px 1fr; grid-auto-rows: 30px; align-items: center; padding: 0 0 1px 12px; }
.combo { display: flex; align-items: center; gap: 4px; padding-left: 3px; }
.combo select { appearance: none; border: 0; padding: 0; background: none; font: inherit; color: #a9a9a9; opacity: 1; width: 88px; }
.combo .caret { border-top-color: #8a8a8a; }
.pick { width: 58px; height: 27px; gap: 5px; background: #93cbe6; border: 1px solid #70b9dd; color: #c3e3f2; }
.types { display: flex; gap: 6px; }
.types button { width: 23px; height: 27px; }
.types .on { background: #93cbe6; border: 1px solid #70b9dd; }
.pivot { padding-left: 3px; }
.actions { height: 36px; display: flex; align-items: center; padding: 0 11px 0 8px; gap: 10px; border-top: 1px solid #c6c6c6; }
.actions svg { margin-right: auto; }
.actions button { width: 60px; height: 19px; border: 1px solid #bcbcbc; background: #ececec; font-size: 12px; color: #b0b0b0; }

.comments { position: absolute; left: 0; bottom: 4px; width: 300px; height: 25px; display: flex; align-items: center; padding: 1px 11px 0 25px; background: #f1f1f1; border: 1px solid #c6c6c6; border-width: 0 1px 1px 0; }
.navbar { position: absolute; left: 838px; bottom: 6px; height: 24px; display: flex; background: #f1f1f1; padding-right: 4px; }
.navbar button { width: 26px; }
.navbar .caret { margin-left: 5px; border-top-width: 4px; }
.navbar .orbit { width: 33px; background: #0696d7; margin-right: -2px; }
.navbar .caret.light { border-top-color: #fff; }
.navbar .wide { width: 34px; }
.navbar .tight { width: 31px; }
.tight .caret { margin-left: 1px; }

footer { height: 46px; background: #f1f1f1; border-top: 1px solid #d4d4d4; display: flex; }
.playback { display: flex; }
.playback button { width: 25px; }
.timeline { margin-left: 13px; display: flex; flex: 1; }
.timeline li { width: 24px; padding: 15px 4px 0; position: relative; height: 42px; }
.timeline li::before { content: ""; position: absolute; left: 0; right: 0; bottom: 0; height: 2px; background: #cacaca; }
.timeline li:first-child::before { left: 12px; }
.timeline li:last-child::before { right: 10px; }
.timeline li::after { content: ""; position: absolute; left: 12px; bottom: 2px; width: 2px; height: 5px; background: #cacaca; }
.timeline svg { width: 16px; height: 16px; }
.timeline .faded { opacity: 1; }
.timeline .faded svg:not(.marker) { opacity: .25; }
.timeline .marker { position: absolute; left: -6px; top: 9px; width: 12px; height: 32px; z-index: 1; }
.prefs { width: 44px; }
```
FILE: script.js
```js
// Ground plane: grid steps of half a unit projected to the view.
const NS = "http://www.w3.org/2000/svg";
const O = [918.7, 538], U = [43.65, 9.6], V = [-20.1, 20.85];
const X0 = -16.6, X1 = 23.5, Y0 = -14.4, Y1 = 25.6;
const at = (a, b) => [O[0] + a * U[0] + b * V[0], O[1] + a * U[1] + b * V[1]];
const pt = (a, b) => at(a, b).map(n => n.toFixed(1)).join(" ");
const seg = (a, b, c, d) => `M${pt(a, b)}L${pt(c, d)}`;

function add(parent, tag, attrs, text) {
  const el = document.createElementNS(NS, tag);
  for (const k in attrs) el.setAttribute(k, attrs[k]);
  if (text) el.textContent = text;
  parent.appendChild(el);
  return el;
}

let minor = "", major = "";
for (let i = Math.round(X0 * 5); i <= X1 * 5; i++) {
  const s = seg(i / 5, Y0, i / 5, Y1);
  if (i % 5) minor += s; else if (i) major += s;
}
for (let i = Math.round(Y0 * 5); i <= Y1 * 5; i++) {
  const s = seg(X0, i / 5, X1, i / 5);
  if (i % 5) minor += s; else if (i) major += s;
}
const grid = document.getElementById("grid");
add(grid, "path", { d: minor, stroke: "#e7e7e7" });
add(grid, "path", { d: major, stroke: "#c2c2c2", "stroke-width": 1.2 });
add(grid, "path", { d: seg(X0, 0, X1, 0), stroke: "#ff8f8f", "stroke-width": 1.2 });
add(grid, "path", { d: seg(0, Y0, 0, Y1), stroke: "#84ff84", "stroke-width": 1.2 });
add(grid, "path", { d: `M${pt(X0, Y0)}L${pt(X1, Y0)}L${pt(X1, Y1)}L${pt(X0, Y1)}Z`, stroke: "#808080", "stroke-width": 1.3 });

// The plane shows faintly through the parts of the body below it.
const over = add(document.getElementById("overlay"), "g", { transform: "translate(760 180) scale(.33333)" });
const clip = add(over, "g", { "clip-path": "url(#plate)" });
const back = add(clip, "g", { transform: "scale(3) translate(-760 -180)", fill: "none", stroke: "#000" });
add(back, "path", { d: minor, "stroke-opacity": .035 });
add(back, "path", { d: major, "stroke-opacity": .13 });

// Scale figures along the far and right edges, in whole and half units.
const rulers = document.getElementById("rulers");
function topLabel(i, label, dx) {
  const [x, y] = at(i, Y0);
  add(rulers, "text", { x, y, dx, dy: 4, class: "ruler-top", transform: `rotate(-46 ${x} ${y})` }, label);
}
topLabel(-11, "5", -13);
for (let i = -10; i <= 10; i++) topLabel(i, String(Math.abs(i) / 2), -2);
for (let i = 2; i <= 10; i++) {
  const [x, y] = at(X1, i);
  add(rulers, "text", { x, y, dx: i % 2 ? 7 : 4, dy: 3, class: "ruler-right", transform: `rotate(12 ${x} ${y})` }, String(i / 2));
}

// Feature history: s sketch, e extrude, h hole, f fillet.
const icons = { s: "t-sketch", e: "i-extrude", h: "i-hole", f: "i-fillet" };
const features = "sesshhshh" + "sessss" + "eseses" + "hh" + "eeee" + "ffff" + "ee" + "ffffff";
const MARKER = 31;
document.getElementById("timeline").innerHTML = [...features].map((k, i) =>
  `<li class="${i >= MARKER ? "faded" : ""}">` +
  (i === MARKER ? '<svg class="marker" viewBox="0 0 12 32"><path d="M0 0h12v4L7 9v23H5V9L0 4z" fill="#606060"/></svg>' : "") +
  `<svg><use href="#${icons[k]}"/></svg></li>`).join("");
```
